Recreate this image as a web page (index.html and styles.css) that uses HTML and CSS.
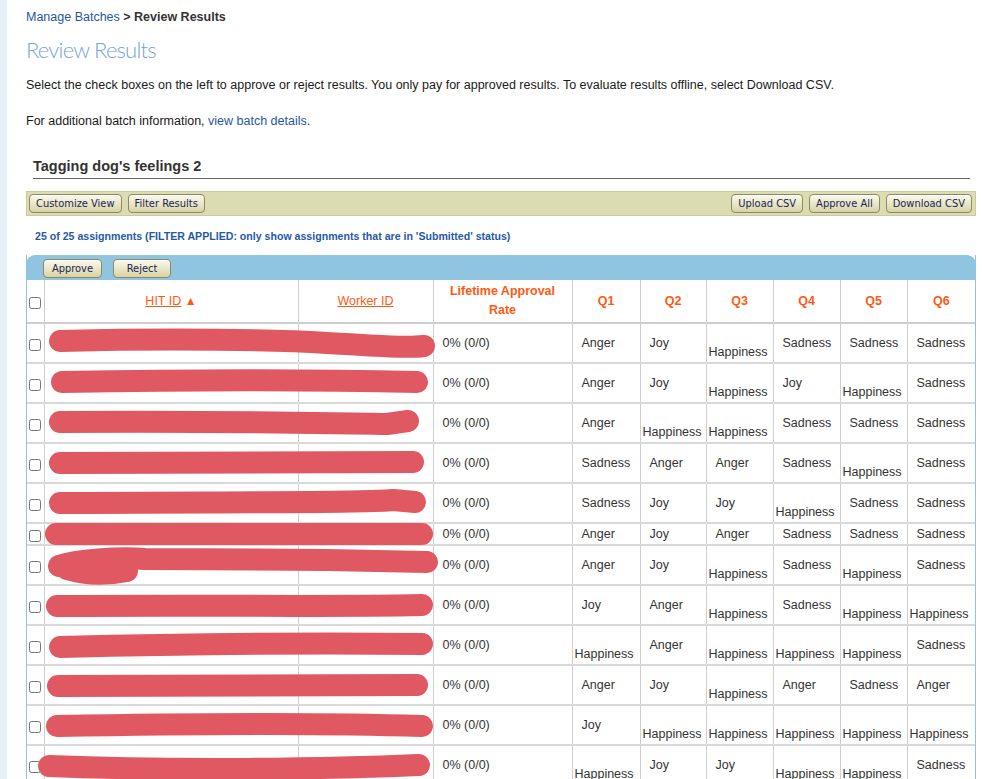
FILE: index.html
```html
<!DOCTYPE html>
<html>
<head>
<meta charset="utf-8">
<link rel="stylesheet" href="styles.css">
</head>
<body>
<div class="page">
  <div class="crumb"><a href="#">Manage Batches</a> <b>&gt; Review Results</b></div>
  <h1 class="title">Review Results</h1>
  <p class="intro">Select the check boxes on the left to approve or reject results. You only pay for approved results. To evaluate results offline, select Download CSV.</p>
  <p class="intro more">For additional batch information, <a href="#">view batch details</a>.</p>
  <h2 class="batch">Tagging dog's feelings 2</h2>
  <div class="toolbar">
    <div class="group">
      <button class="btn">Customize View</button>
      <button class="btn">Filter Results</button>
    </div>
    <div class="group">
      <button class="btn">Upload CSV</button>
      <button class="btn">Approve All</button>
      <button class="btn">Download CSV</button>
    </div>
  </div>
  <div class="count">25 of 25 assignments (FILTER APPLIED: only show assignments that are in 'Submitted' status)</div>

  <div class="results">
    <div class="tbar">
      <button class="btn">Approve</button>
      <button class="btn">Reject</button>
    </div>
    <table class="grid">
      <colgroup>
        <col style="width:17px"><col style="width:254px"><col style="width:135px"><col style="width:139px">
        <col style="width:68px"><col style="width:66px"><col style="width:67px"><col style="width:67px"><col style="width:67px"><col style="width:68px">
      </colgroup>
      <thead>
        <tr>
          <th class="cb"><input type="checkbox"></th>
          <th><a href="#">HIT ID</a> <span class="arrow">▲</span></th>
          <th><a href="#">Worker ID</a></th>
          <th>Lifetime Approval<br>Rate</th>
          <th>Q1</th><th>Q2</th><th>Q3</th><th>Q4</th><th>Q5</th><th>Q6</th>
        </tr>
      </thead>
      <tbody>
        <tr class="tall"><td class="cb"><input type="checkbox"></td><td></td><td></td><td>0% (0/0)</td><td>Anger</td><td>Joy</td><td class="lo">Happiness</td><td>Sadness</td><td>Sadness</td><td>Sadness</td></tr>
        <tr class="tall"><td class="cb"><input type="checkbox"></td><td></td><td></td><td>0% (0/0)</td><td>Anger</td><td>Joy</td><td class="lo">Happiness</td><td>Joy</td><td class="lo">Happiness</td><td>Sadness</td></tr>
        <tr class="tall"><td class="cb"><input type="checkbox"></td><td></td><td></td><td>0% (0/0)</td><td>Anger</td><td class="lo">Happiness</td><td class="lo">Happiness</td><td>Sadness</td><td>Sadness</td><td>Sadness</td></tr>
        <tr class="tall"><td class="cb"><input type="checkbox"></td><td></td><td></td><td>0% (0/0)</td><td>Sadness</td><td>Anger</td><td>Anger</td><td>Sadness</td><td class="lo">Happiness</td><td>Sadness</td></tr>
        <tr class="tall"><td class="cb"><input type="checkbox"></td><td></td><td></td><td>0% (0/0)</td><td>Sadness</td><td>Joy</td><td>Joy</td><td class="lo">Happiness</td><td>Sadness</td><td>Sadness</td></tr>
        <tr><td class="cb"><input type="checkbox"></td><td></td><td></td><td>0% (0/0)</td><td>Anger</td><td>Joy</td><td>Anger</td><td>Sadness</td><td>Sadness</td><td>Sadness</td></tr>
        <tr class="tall"><td class="cb"><input type="checkbox"></td><td></td><td></td><td>0% (0/0)</td><td>Anger</td><td>Joy</td><td class="lo">Happiness</td><td>Sadness</td><td class="lo">Happiness</td><td>Sadness</td></tr>
        <tr class="tall"><td class="cb"><input type="checkbox"></td><td></td><td></td><td>0% (0/0)</td><td>Joy</td><td>Anger</td><td class="lo">Happiness</td><td>Sadness</td><td class="lo">Happiness</td><td class="lo">Happiness</td></tr>
        <tr class="tall"><td class="cb"><input type="checkbox"></td><td></td><td></td><td>0% (0/0)</td><td class="lo">Happiness</td><td>Anger</td><td class="lo">Happiness</td><td class="lo">Happiness</td><td class="lo">Happiness</td><td>Sadness</td></tr>
        <tr class="tall"><td class="cb"><input type="checkbox"></td><td></td><td></td><td>0% (0/0)</td><td>Anger</td><td>Joy</td><td class="lo">Happiness</td><td>Anger</td><td>Sadness</td><td>Anger</td></tr>
        <tr class="tall"><td class="cb"><input type="checkbox"></td><td></td><td></td><td>0% (0/0)</td><td>Joy</td><td class="lo">Happiness</td><td class="lo">Happiness</td><td class="lo">Happiness</td><td class="lo">Happiness</td><td class="lo">Happiness</td></tr>
        <tr class="tall"><td class="cb"><input type="checkbox"></td><td></td><td></td><td>0% (0/0)</td><td class="lo">Happiness</td><td>Joy</td><td>Joy</td><td class="lo">Happiness</td><td class="lo">Happiness</td><td>Sadness</td></tr>
      </tbody>
    </table>
    <svg class="redact" width="950" height="540" viewBox="0 0 950 540" fill="none" stroke="#e05962" stroke-width="22" stroke-linecap="round" stroke-linejoin="round">
      <path d="M33 86 C150 83 250 85 300 88 S380 93 397 91"/>
      <path d="M35 127 C150 125 300 125 390 127"/>
      <path d="M33 167 C200 166 300 168 360 169 L381 166"/>
      <path d="M33 208 C200 207 300 207 386 207"/>
      <path d="M33 248 C200 247 340 248 366 245 L388 247"/>
      <path d="M29 279 L395 279"/>
      <path d="M32 311 C50 305 90 302 118 304 L300 305 L400 307"/>
      <path d="M40 314 C60 320 80 320 100 316"/>
      <path d="M30 351 C200 350 300 352 395 350"/>
      <path d="M33 392 C200 388 300 388 395 389"/>
      <path d="M31 431 C200 430 300 430 390 430"/>
      <path d="M30 471 C200 468 300 468 395 471"/>
      <path d="M22 511 C150 516 300 514 392 510"/>
    </svg>
  </div>
</div>
</body>
</html>
```
FILE: styles.css
```css
html, body {
  margin: 0;
  padding: 0;
  background: #fff;
}
body {
  font-family: "Liberation Sans", Arial, sans-serif;
  font-size: 12.5px;
  color: #222;
  overflow: hidden;
  height: 779px;
  border-left: 7px solid #e6f0f8;
}
.page {
  padding: 9px 0 0 19px;
  width: 950px;
}
a { color: #1f56a4; text-decoration: none; }
.crumb {
  line-height: 16px;
  color: #333;
}
.crumb b { color: #333; }
.title {
  margin: 12px 0 0 0;
  font-family: Lato, "Liberation Sans", sans-serif;
  font-weight: 300;
  font-size: 22px;
  line-height: 26px;
  color: #74a3dc;
  letter-spacing: -0.8px;
}
.intro {
  margin: 14px 0 0 0;
  line-height: 16px;
  color: #1a1a1a;
}
.intro.more { margin-top: 20px; }
.batch {
  margin: 28px 0 0 7px;
  font-size: 14.5px;
  line-height: 18px;
  padding-bottom: 3px;
  border-bottom: 1px solid #666;
  color: #333;
  width: 937px;
}
.toolbar {
  margin-top: 12px;
  height: 23px;
  background: #dcdcb2;
  border: 1px solid #cacaa0;
  display: flex;
  justify-content: space-between;
  align-items: center;
  padding: 0 3px 0 2px;
}
.group { display: flex; gap: 6px; }
.btn {
  font-family: "Liberation Sans Narrow", "DejaVu Sans Condensed", "Liberation Sans", sans-serif;
  font-size: 11px;
  height: 19px;
  line-height: 15px;
  padding: 0 6px;
  border: 1px solid #8c8a5e;
  border-radius: 4px;
  background: linear-gradient(#fbfaec, #e6e3c2 60%, #d6d2a6);
  color: #1c2356;
  box-shadow: inset 0 1px 0 #fff;
}
.count {
  margin: 13px 0 0 9px;
  font-size: 10.6px;
  font-weight: bold;
  line-height: 14px;
  color: #1f5aa8;
}
.results {
  position: relative;
  margin-top: 12px;
  width: 948px;
  border-left: 1px solid #8fc5e1;
  border-right: 1px solid #8fc5e1;
}
.tbar {
  height: 25px;
  background: #8fc5e1;
  border-radius: 9px 9px 0 0;
  margin: 0 -1px;
  display: flex;
  align-items: flex-start;
  gap: 11px;
  padding: 4px 0 0 17px;
  box-sizing: border-box;
}
.tbar .btn { width: 59px; padding: 0; }
.tbar .btn + .btn { width: 58px; }
.grid {
  width: 948px;
  table-layout: fixed;
  border-collapse: collapse;
}
.grid th, .grid td {
  border-left: 1px solid #cfcfcf;
  border-right: 1px solid #cfcfcf;
  border-bottom: 2px solid #d9d9d9;
  padding: 2px 4px 2px 9px;
  line-height: 16px;
  color: #333;
  vertical-align: middle;
  white-space: nowrap;
  overflow: hidden;
}
.grid th {
  height: 42px;
  box-sizing: border-box;
  padding: 2px 2px;
  line-height: 19px;
  text-align: center;
  color: #ff5a14;
  font-size: 12.5px;
  border-bottom: 2px solid #cfcfcf;
}
.grid th:first-child, .grid td:first-child { border-left: none; }
.grid th:last-child, .grid td:last-child { border-right: none; }
.grid th a { color: #ff5a14; text-decoration: underline; font-weight: normal; }
.arrow { font-size: 12px; }
.grid .cb { padding: 0 0 0 2px; text-align: left; }
.cb input {
  width: 12px;
  height: 12px;
  margin: 4px 0 0 0;
  vertical-align: middle;
}
.grid tr.tall { height: 40px; }
.grid td.lo {
  vertical-align: bottom;
  padding: 0 0 2px 2px;
}
.redact {
  position: absolute;
  top: 0;
  left: 0;
  pointer-events: none;
}
```
